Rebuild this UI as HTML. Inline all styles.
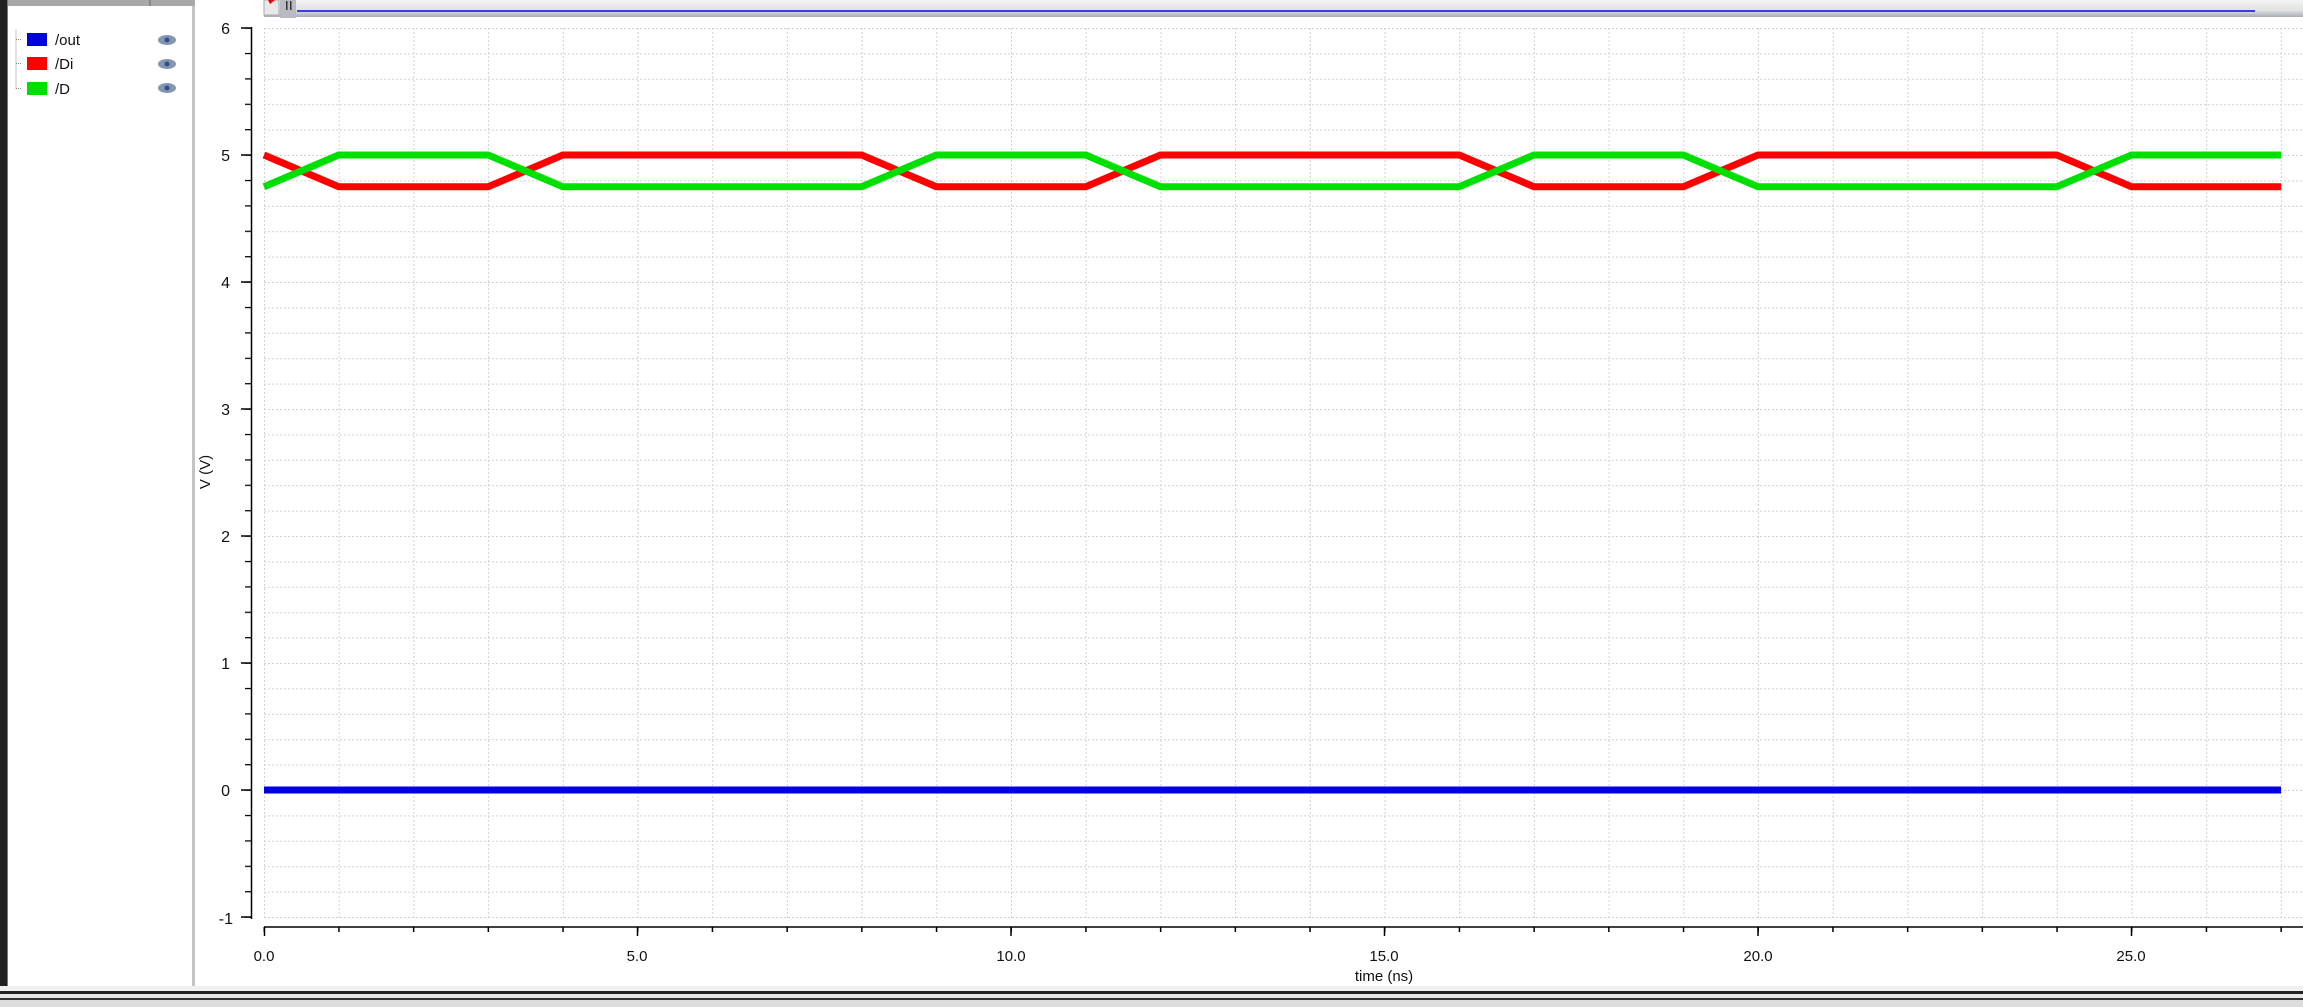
<!DOCTYPE html>
<html><head><meta charset="utf-8"><style>
html,body{margin:0;padding:0;width:2303px;height:1007px;overflow:hidden;background:#fff}
svg{display:block}
text{font-family:"Liberation Sans","DejaVu Sans",sans-serif}
</style></head><body>
<svg width="2303" height="1007" viewBox="0 0 2303 1007" xmlns="http://www.w3.org/2000/svg">
<defs>
<pattern id="vg" x="264" y="0" width="74.7" height="1007" patternUnits="userSpaceOnUse">
<line x1="0.5" y1="0" x2="0.5" y2="1007" stroke="#d2d2d2" stroke-width="1" stroke-dasharray="2 2"/>
</pattern>
<pattern id="hg" x="0" y="28" width="2303" height="25.4" patternUnits="userSpaceOnUse">
<line x1="0" y1="0.5" x2="2303" y2="0.5" stroke="#d2d2d2" stroke-width="1" stroke-dasharray="2 2"/>
</pattern>
<pattern id="yt" x="0" y="27.5" width="20" height="25.4" patternUnits="userSpaceOnUse">
<line x1="0" y1="0.5" x2="20" y2="0.5" stroke="#000" stroke-width="1.5"/>
</pattern>
<pattern id="xt" x="263.5" y="0" width="74.7" height="20" patternUnits="userSpaceOnUse">
<line x1="0.75" y1="0" x2="0.75" y2="20" stroke="#000" stroke-width="1.5"/>
</pattern>
<linearGradient id="sb" x1="0" y1="0" x2="0" y2="1"><stop offset="0" stop-color="#f4f4f4"/><stop offset="0.6" stop-color="#e2e2e2"/><stop offset="1" stop-color="#a8acb2"/></linearGradient>
</defs>
<rect x="0" y="0" width="195" height="990" fill="#fff"/>
<rect x="0" y="0" width="195" height="6" fill="#a8a8a8"/>
<rect x="149" y="0" width="2" height="6" fill="#888"/>
<rect x="0" y="0" width="7" height="990" fill="#222"/>
<rect x="7" y="0" width="1" height="990" fill="#777"/>
<rect x="192" y="6" width="3" height="980" fill="#c4c4c4"/>
<path d="M16 29.5 v59 M16 39.5 h6 M16 63.5 h6 M16 88.5 h6" stroke="#888" stroke-width="1" stroke-dasharray="1 1" fill="none"/>
<rect x="27" y="33" width="20" height="13" fill="#0000e0"/>
<rect x="27" y="57" width="20" height="13" fill="#ff0000"/>
<rect x="27" y="82" width="20" height="13" fill="#00e000"/>
<text x="55" y="45" font-size="15" fill="#111">/out</text>
<text x="55" y="69" font-size="15" fill="#111">/Di</text>
<text x="55" y="94" font-size="15" fill="#111">/D</text>
<g fill="#8596b4"><ellipse cx="167" cy="40" rx="9" ry="5"/><ellipse cx="167" cy="64" rx="9" ry="5"/><ellipse cx="167" cy="88" rx="9" ry="5"/></g>
<g fill="#3a4e80"><circle cx="167" cy="40" r="2.5"/><circle cx="167" cy="64" r="2.5"/><circle cx="167" cy="88" r="2.5"/></g>
<rect x="264" y="0" width="2039" height="17" fill="url(#sb)"/>
<rect x="264" y="0" width="15" height="15" fill="#e8e8e8" stroke="#aaa"/>
<path d="M268 0 L275 0 L270 4 Z" fill="#e00"/>
<rect x="280" y="0" width="16" height="18" fill="#b8bcc2"/>
<rect x="286" y="1" width="1.5" height="9" fill="#333"/><rect x="290" y="1" width="1.5" height="9" fill="#333"/>
<rect x="297" y="10" width="1958" height="2" fill="#3c3ce6"/>
<rect x="264" y="28" width="2040" height="890" fill="url(#vg)"/>
<rect x="264" y="28" width="2040" height="890" fill="url(#hg)"/>
<rect x="245" y="27" width="7" height="892" fill="url(#yt)"/>
<line x1="251.5" y1="27" x2="251.5" y2="919" stroke="#000" stroke-width="1.5"/>
<g stroke="#000" stroke-width="1.5">
<line x1="241" y1="28" x2="252" y2="28"/><line x1="241" y1="155" x2="252" y2="155"/><line x1="241" y1="282" x2="252" y2="282"/><line x1="241" y1="409" x2="252" y2="409"/><line x1="241" y1="536" x2="252" y2="536"/><line x1="241" y1="663" x2="252" y2="663"/><line x1="241" y1="790" x2="252" y2="790"/><line x1="241" y1="917" x2="252" y2="917"/>
</g>
<g font-size="16" fill="#111" text-anchor="end">
<text x="230" y="34">6</text><text x="230" y="161">5</text><text x="230" y="288">4</text><text x="230" y="415">3</text><text x="230" y="542">2</text><text x="230" y="669">1</text><text x="230" y="796">0</text><text x="233" y="924">-1</text>
</g>
<text transform="translate(210,472) rotate(-90)" font-size="15" fill="#111" text-anchor="middle">V (V)</text>
<line x1="264" y1="927" x2="2303" y2="927" stroke="#000" stroke-width="1.5"/>
<rect x="263" y="927" width="2040" height="5" fill="url(#xt)"/>
<g stroke="#000" stroke-width="1.5"><line x1="264.5" y1="927" x2="264.5" y2="936"/><line x1="637.5" y1="927" x2="637.5" y2="936"/><line x1="1011" y1="927" x2="1011" y2="936"/><line x1="1384.5" y1="927" x2="1384.5" y2="936"/><line x1="1758" y1="927" x2="1758" y2="936"/><line x1="2131.5" y1="927" x2="2131.5" y2="936"/></g>
<g font-size="15" fill="#111" text-anchor="middle">
<text x="264" y="961">0.0</text><text x="637" y="961">5.0</text><text x="1011" y="961">10.0</text><text x="1384" y="961">15.0</text><text x="1758" y="961">20.0</text><text x="2131" y="961">25.0</text>
</g>
<text x="1384" y="981" font-size="15" fill="#111" text-anchor="middle">time (ns)</text>
<line x1="264" y1="790" x2="2281" y2="790" stroke="#0000e0" stroke-width="7"/>
<path d="M264 155 L338.7 186.75 L488.1 186.75 L562.8 155 L861.6 155 L936.3 186.75 L1085.7 186.75 L1160.4 155 L1459.2 155 L1533.9 186.75 L1683.3 186.75 L1758 155 L2056.8 155 L2131.5 186.75 L2281 186.75" fill="none" stroke="#ff0000" stroke-width="7"/>
<path d="M264 186.75 L338.7 155 L488.1 155 L562.8 186.75 L861.6 186.75 L936.3 155 L1085.7 155 L1160.4 186.75 L1459.2 186.75 L1533.9 155 L1683.3 155 L1758 186.75 L2056.8 186.75 L2131.5 155 L2281 155" fill="none" stroke="#00e000" stroke-width="7"/>
<rect x="0" y="986" width="2303" height="5" fill="#f0f0f0"/>
<rect x="0" y="991" width="2303" height="3" fill="#222"/>
<rect x="0" y="994" width="2303" height="4" fill="#e6e6e6"/>
<rect x="0" y="998" width="2303" height="2" fill="#333"/>
<rect x="0" y="1000" width="2303" height="7" fill="#dcdcdc"/>
</svg>
</body></html>
